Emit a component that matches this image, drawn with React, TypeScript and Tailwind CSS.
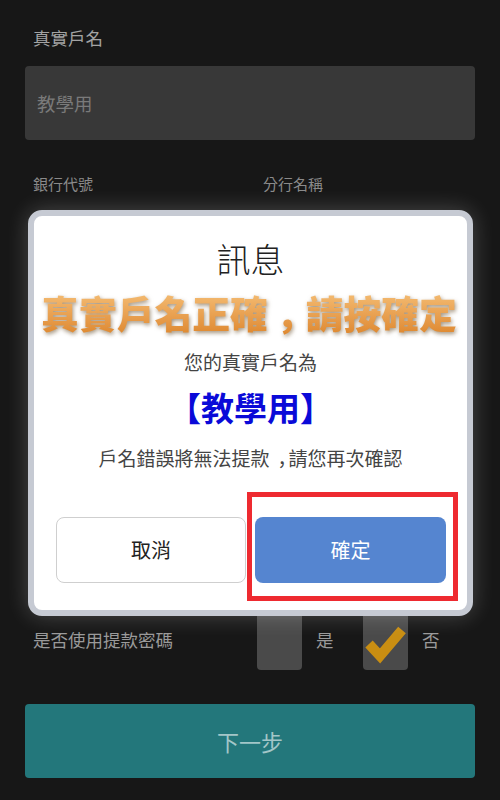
const font = "font-['Noto_Sans_CJK_TC','Noto_Sans_CJK_SC',sans-serif]";

function CheckBox({ checked }: { checked?: boolean }) {
  return (
    <div className="relative h-[59px] w-[45px] rounded bg-[#4a4a4a]">
      {checked && (
        <svg className="absolute left-0 top-[12px]" width="45" height="46" viewBox="0 0 45 46" fill="none">
          <path d="M6 21 L17 33 L39 7" stroke="#c98e12" strokeWidth="10" />
        </svg>
      )}
    </div>
  );
}

function Dialog() {
  return (
    <div className="absolute left-[28px] top-[210px] flex h-[406px] w-[445px] flex-col items-center rounded-[14px] border-[6px] border-[#c6cad3] bg-white shadow-[0_0_22px_rgba(255,255,255,0.22)]">
      <h2 className="mt-[18px] text-[34px] leading-[50px] font-light text-[#222]">訊息</h2>
      <p className="mr-[3px] mt-[2px] whitespace-nowrap bg-gradient-to-b from-[#f7c47c] to-[#dc8427] bg-clip-text text-[37.8px] leading-[52px] font-black text-transparent drop-shadow-[1px_2px_2px_rgba(90,60,20,0.55)]">
        真實戶名正確<span className="ml-[8px] font-['Noto_Sans_CJK_KR',sans-serif] tracking-[-8px]">，</span>請按確定
      </p>
      <p className="mt-[10px] text-[19px] leading-[28px] text-[#444]">您的真實戶名為</p>
      <p className="mt-[7px] text-[33px] leading-[48px] font-bold text-[#0a0ad8]">【教學用】</p>
      <p className="mt-[13px] text-[19px] leading-[28px] text-[#444]">
        戶名錯誤將無法提款<span className="ml-[8px] font-['Noto_Sans_CJK_KR',sans-serif] tracking-[-8px]">，</span>請您再次確認
      </p>
      <div className="mt-[45px] flex w-full gap-[9px] pl-[22px] pr-[20px]">
        <button className="h-[66px] w-[190px] rounded-lg border-[1.5px] border-[#cfcfcf] bg-white text-[20px] text-[#222]">
          取消
        </button>
        <div className="relative">
          <button className="h-[66px] w-[191px] rounded-lg bg-[#5585d0] text-[20px] text-white">確定</button>
          <div className="absolute -bottom-[18px] -left-[8px] -right-[12px] -top-[25px] border-[5px] border-[#ee2a30]" />
        </div>
      </div>
    </div>
  );
}

export default function App() {
  return (
    <div className={`relative h-[800px] w-[500px] overflow-hidden bg-[#171717] px-[25px] ${font}`}>
      <div className="px-[8px] pt-[24px] text-[17.5px] leading-[28px] text-[#a3a3a3]">真實戶名</div>
      <div className="mt-[14px] flex h-[74px] items-center rounded bg-[#383838] px-[12px] pt-[2px] text-[18.5px] text-[#7a7a7a]">
        教學用
      </div>
      <div className="mt-[33px] grid grid-cols-[230px_1fr] px-[8px] text-[15px] leading-[22px] text-[#8a8a8a]">
        <span>銀行代號</span>
        <span>分行名稱</span>
      </div>

      <div className="mt-[416px] flex items-center">
        <span className="ml-[8px] w-[224px] text-[17.5px] text-[#9a9a9a]">是否使用提款密碼</span>
        <CheckBox />
        <span className="ml-[14px] w-[47px] text-[17.5px] text-[#9a9a9a]">是</span>
        <CheckBox checked />
        <span className="ml-[14px] text-[17.5px] text-[#9a9a9a]">否</span>
      </div>

      <button className="mt-[34px] h-[74px] w-full rounded bg-[#23777b] text-[22px] text-[#a3c6c8]">下一步</button>

      <Dialog />
    </div>
  );
}
